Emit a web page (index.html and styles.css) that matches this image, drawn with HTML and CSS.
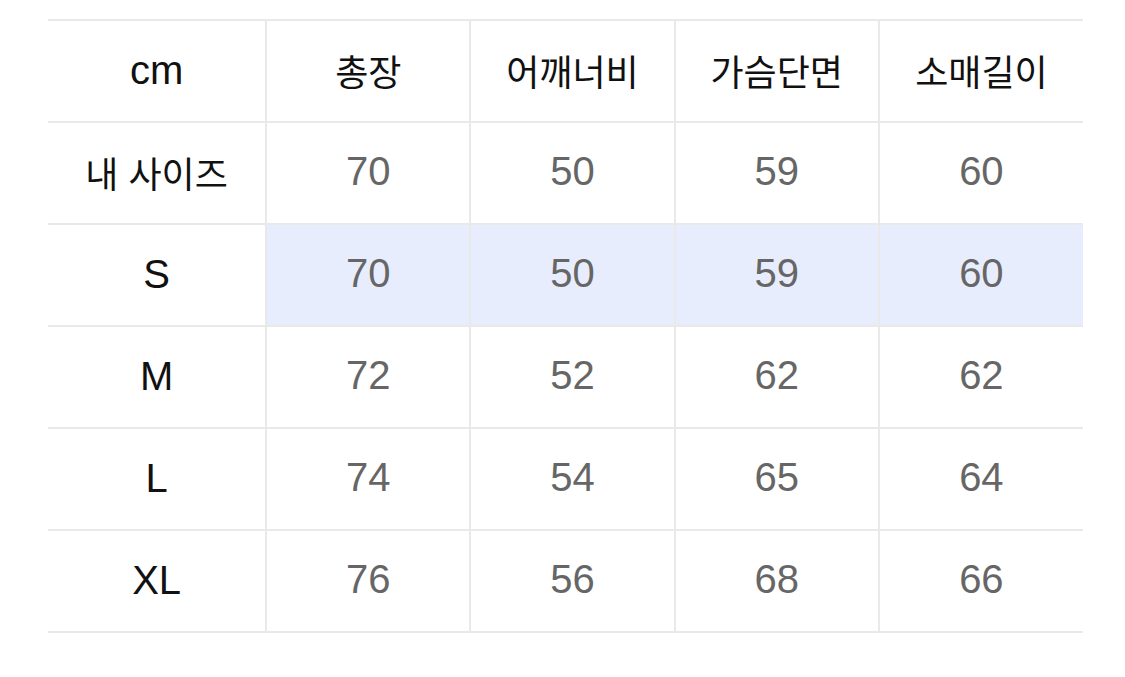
FILE: index.html
```html
<!DOCTYPE html>
<html lang="ko">
<head>
<meta charset="utf-8">
<title>사이즈표</title>
<link rel="stylesheet" href="styles.css">
</head>
<body>
<div class="page">
  <table class="size-table">
    <colgroup>
      <col class="col-first">
      <col class="col-data">
      <col class="col-data">
      <col class="col-data">
      <col class="col-data">
    </colgroup>
    <thead>
      <tr>
        <th class="latin">cm</th>
        <th class="ko">총장</th>
        <th class="ko">어깨너비</th>
        <th class="ko">가슴단면</th>
        <th class="ko">소매길이</th>
      </tr>
    </thead>
    <tbody>
      <tr>
        <th class="ko">내 사이즈</th>
        <td>70</td><td>50</td><td>59</td><td>60</td>
      </tr>
      <tr class="selected">
        <th class="latin">S</th>
        <td>70</td><td>50</td><td>59</td><td>60</td>
      </tr>
      <tr>
        <th class="latin">M</th>
        <td>72</td><td>52</td><td>62</td><td>62</td>
      </tr>
      <tr>
        <th class="latin">L</th>
        <td>74</td><td>54</td><td>65</td><td>64</td>
      </tr>
      <tr>
        <th class="latin">XL</th>
        <td>76</td><td>56</td><td>68</td><td>66</td>
      </tr>
    </tbody>
  </table>
</div>
</body>
</html>
```
FILE: styles.css
```css
html, body {
  margin: 0;
  padding: 0;
  background: #ffffff;
}

.page {
  padding: 19px 0 0 48px;
  font-family: "Liberation Sans", "Noto Sans CJK KR", sans-serif;
}

.size-table {
  width: 1035px;
  table-layout: fixed;
  border-collapse: collapse;
}

.col-first { width: 218px; }
.col-data { width: 204px; }

.size-table th,
.size-table td {
  height: 98px;
  padding: 0 0 2px 0;
  text-align: center;
  vertical-align: middle;
  border-top: 2px solid #e9e9e9;
  border-bottom: 2px solid #e9e9e9;
  border-left: 2px solid #e9e9e9;
}

.size-table tr > :first-child {
  border-left: none;
}

.size-table th {
  color: #111111;
  font-weight: 400;
}

.size-table .latin {
  font-size: 40px;
}

.size-table .ko {
  font-size: 36px;
  font-weight: 400;
}

.size-table td {
  height: 96px;
  padding-bottom: 4px;
  color: #666666;
  font-size: 40px;
  font-weight: 400;
}

.size-table tr.selected td {
  background: #e8edfd;
}
```
